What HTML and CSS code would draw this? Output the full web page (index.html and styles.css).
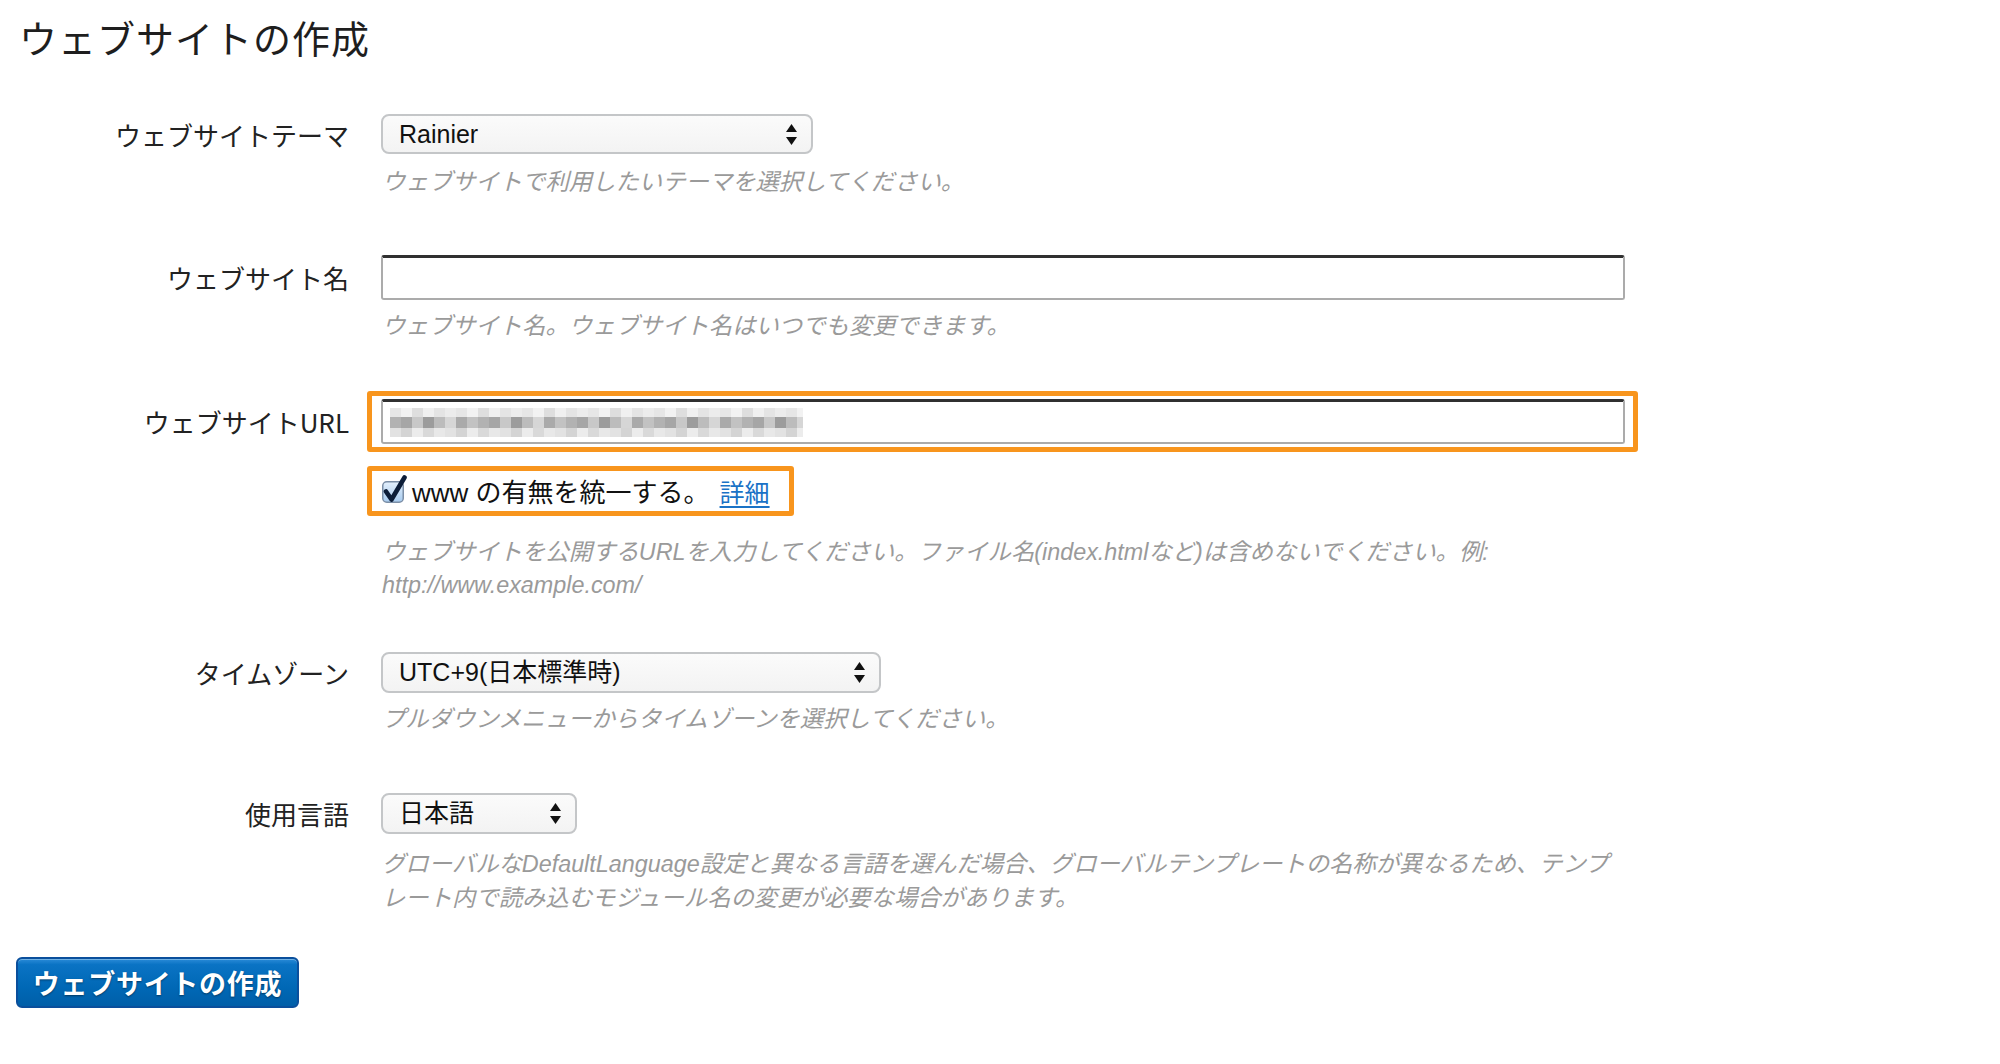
FILE: index.html
```html
<!DOCTYPE html>
<html lang="ja">
<head>
<meta charset="utf-8">
<title>ウェブサイトの作成</title>
<link rel="stylesheet" href="styles.css">
</head>
<body>
<h1 class="title">ウェブサイトの作成</h1>
<form class="form">
  <div class="row row-theme">
    <div class="label label-select">ウェブサイトテーマ</div>
    <div class="field">
      <div class="select select-theme">
        <span class="select-text">Rainier</span>
        <svg class="arrows" width="11" height="21" viewBox="0 0 11 21"><path d="M0 8 L5.5 0 L11 8 Z M0 13 L11 13 L5.5 21 Z"/></svg>
      </div>
      <p class="help help-theme">ウェブサイトで利用したいテーマを選択してください。</p>
    </div>
  </div>

  <div class="row row-name">
    <div class="label label-input">ウェブサイト名</div>
    <div class="field">
      <div class="textbox"></div>
      <p class="help help-name">ウェブサイト名。ウェブサイト名はいつでも変更できます。</p>
    </div>
  </div>

  <div class="row row-url">
    <div class="label label-url">ウェブサイトURL</div>
    <div class="field">
      <div class="highlight highlight-url">
        <div class="textbox textbox-url"><div class="blur"></div></div>
      </div>
      <div class="highlight highlight-check">
        <svg class="checkbox" width="32" height="28" viewBox="0 0 32 28">
          <defs>
            <linearGradient id="cbg" x1="0" y1="0" x2="0" y2="1">
              <stop offset="0" stop-color="#e4f0fc"/>
              <stop offset="1" stop-color="#a7cbef"/>
            </linearGradient>
          </defs>
          <rect x="0.75" y="6.75" width="20.5" height="20.5" rx="4" fill="url(#cbg)" stroke="#7b8ea6" stroke-width="1.5"/>
          <path d="M4 16.5 L9.5 24.5 L22.5 2.5" fill="none" stroke="#0c1d38" stroke-width="4.6" stroke-linecap="round" stroke-linejoin="round"/>
        </svg>
        <span class="check-text">www の有無を統一する。</span>
        <a class="detail" href="#">詳細</a>
      </div>
      <p class="help help-url">ウェブサイトを公開するURLを入力してください。ファイル名(index.htmlなど)は含めないでください。例:<br>http://www.example.com/</p>
    </div>
  </div>

  <div class="row row-tz">
    <div class="label label-select">タイムゾーン</div>
    <div class="field">
      <div class="select select-tz">
        <span class="select-text">UTC+9(日本標準時)</span>
        <svg class="arrows" width="11" height="21" viewBox="0 0 11 21"><path d="M0 8 L5.5 0 L11 8 Z M0 13 L11 13 L5.5 21 Z"/></svg>
      </div>
      <p class="help">プルダウンメニューからタイムゾーンを選択してください。</p>
    </div>
  </div>

  <div class="row row-lang">
    <div class="label label-select">使用言語</div>
    <div class="field">
      <div class="select select-lang">
        <span class="select-text">日本語</span>
        <svg class="arrows" width="11" height="21" viewBox="0 0 11 21"><path d="M0 8 L5.5 0 L11 8 Z M0 13 L11 13 L5.5 21 Z"/></svg>
      </div>
      <p class="help help-lang">グローバルなDefaultLanguage設定と異なる言語を選んだ場合、グローバルテンプレートの名称が異なるため、テンプ<br>レート内で読み込むモジュール名の変更が必要な場合があります。</p>
    </div>
  </div>

  <div class="actions">
    <button class="btn" type="button">ウェブサイトの作成</button>
  </div>
</form>
</body>
</html>
```
FILE: styles.css
```css
html, body {
  margin: 0;
  padding: 0;
  background: #ffffff;
}

body {
  font-family: "Liberation Sans", "Noto Sans CJK JP", sans-serif;
  color: #222222;
}

.title {
  margin: 0;
  padding: 13px 0 0 19px;
  font-family: "Noto Sans CJK JP", sans-serif;
  font-size: 38px;
  font-weight: 400;
  line-height: 48px;
  letter-spacing: 1px;
  color: #1e1e1e;
}

.form {
  margin: 0;
  padding: 0;
}

.row {
  display: grid;
  grid-template-columns: 349px 1260px;
  column-gap: 32px;
  align-items: start;
}

.row-theme { margin-top: 53px; }
.row-name { margin-top: 56px; }
.row-url { margin-top: 48px; }
.row-tz { margin-top: 50px; }
.row-lang { margin-top: 57px; }

.label {
  text-align: right;
  font-family: "Noto Sans CJK JP", sans-serif;
  font-size: 26px;
  color: #222222;
  white-space: nowrap;
}

.label-select { line-height: 41px; }
.label-input { line-height: 45px; }
.label-url { line-height: 45px; padding-top: 8px; }

.field {
  display: flex;
  flex-direction: column;
  align-items: flex-start;
}

.select {
  box-sizing: border-box;
  height: 41px;
  display: flex;
  align-items: center;
  justify-content: space-between;
  padding: 0 14px 0 16px;
  border: 2px solid #c4c6c8;
  border-radius: 8px;
  background: linear-gradient(#fbfbfb, #f3f3f3);
  font-family: "Liberation Sans", "Noto Sans CJK JP", sans-serif;
  font-size: 25px;
  color: #111111;
}

.select-theme { width: 432px; height: 40px; }
.select-tz { width: 500px; }
.select-lang { width: 196px; }

.select-text {
  line-height: 37px;
  white-space: nowrap;
}

.arrows {
  flex: none;
  fill: #111111;
}

.help {
  margin: 10px 0 0 1px;
  font-family: "Liberation Sans", "Noto Sans CJK JP", sans-serif;
  font-style: italic;
  font-size: 23.35px;
  line-height: 33px;
  color: #9a9a9a;
  white-space: nowrap;
}

.help-theme { margin-top: 12px; }
.help-name { margin-top: 10px; }
.help-url { margin-top: 20px; line-height: 33px; }
.help-lang { margin-top: 13px; line-height: 34px; }

.textbox {
  box-sizing: border-box;
  width: 1244px;
  height: 45px;
  border: 2px solid #ababab;
  border-top: 3px solid #303030;
  border-radius: 3px;
  background: #ffffff;
  display: flex;
  align-items: center;
  padding-left: 7px;
}

.highlight {
  box-sizing: border-box;
  border: 5px solid #f8951d;
  border-radius: 3px;
  margin-left: -14px;
  background: #ffffff;
}

.highlight-url {
  padding: 3px 8px 3px 9px;
}

.highlight-check {
  margin-top: 14px;
  height: 50px;
  width: 427px;
  display: flex;
  align-items: center;
  padding-left: 10px;
  padding-bottom: 1px;
}

.checkbox {
  flex: none;
  margin-top: -4px;
}

.check-text {
  margin-left: -2px;
  font-family: "Liberation Sans", "Noto Sans CJK JP", sans-serif;
  font-size: 26px;
  color: #111111;
  white-space: nowrap;
}

.detail {
  margin-left: 10px;
  font-family: "Noto Sans CJK JP", sans-serif;
  font-size: 25px;
  color: #1a72c6;
  text-decoration: underline;
  text-underline-offset: 4px;
}

.blur {
  width: 413px;
  height: 29px;
  background:
    repeating-linear-gradient(90deg, #e6e6e6 0 11px, #f2f2f2 11px 22px, #dedede 22px 33px, #f0f0f0 33px 44px, #e4e4e4 44px 55px, #ececec 55px 66px) 0 0 / 100% 9px no-repeat,
    repeating-linear-gradient(90deg, #b2b2b2 0 11px, #a6a6a6 11px 22px, #c8c8c8 22px 33px, #9c9c9c 33px 44px, #bcbcbc 44px 55px, #d6d6d6 55px 66px, #aaaaaa 66px 77px, #c2c2c2 77px 88px) 0 9px / 100% 11px no-repeat,
    repeating-linear-gradient(90deg, #e2e2e2 0 11px, #d4d4d4 11px 22px, #ececec 22px 33px, #d9d9d9 33px 44px, #e8e8e8 44px 55px) 0 20px / 100% 9px no-repeat;
}

.actions {
  margin-top: 42px;
  padding-left: 16px;
}

.btn {
  box-sizing: border-box;
  width: 283px;
  height: 51px;
  padding: 0;
  border: 2px solid #0a4f9c;
  border-radius: 6px;
  background: linear-gradient(#2a8bd8 0%, #0a73c4 12%, #0068b6 60%, #005fa8 100%);
  box-shadow: inset 0 1px 0 rgba(255, 255, 255, 0.35);
  font-family: "Noto Sans CJK JP", sans-serif;
  font-size: 27px;
  font-weight: 700;
  letter-spacing: 0.7px;
  color: #ffffff;
  text-shadow: 0 1px 2px rgba(0, 0, 0, 0.45);
  cursor: pointer;
}
```
